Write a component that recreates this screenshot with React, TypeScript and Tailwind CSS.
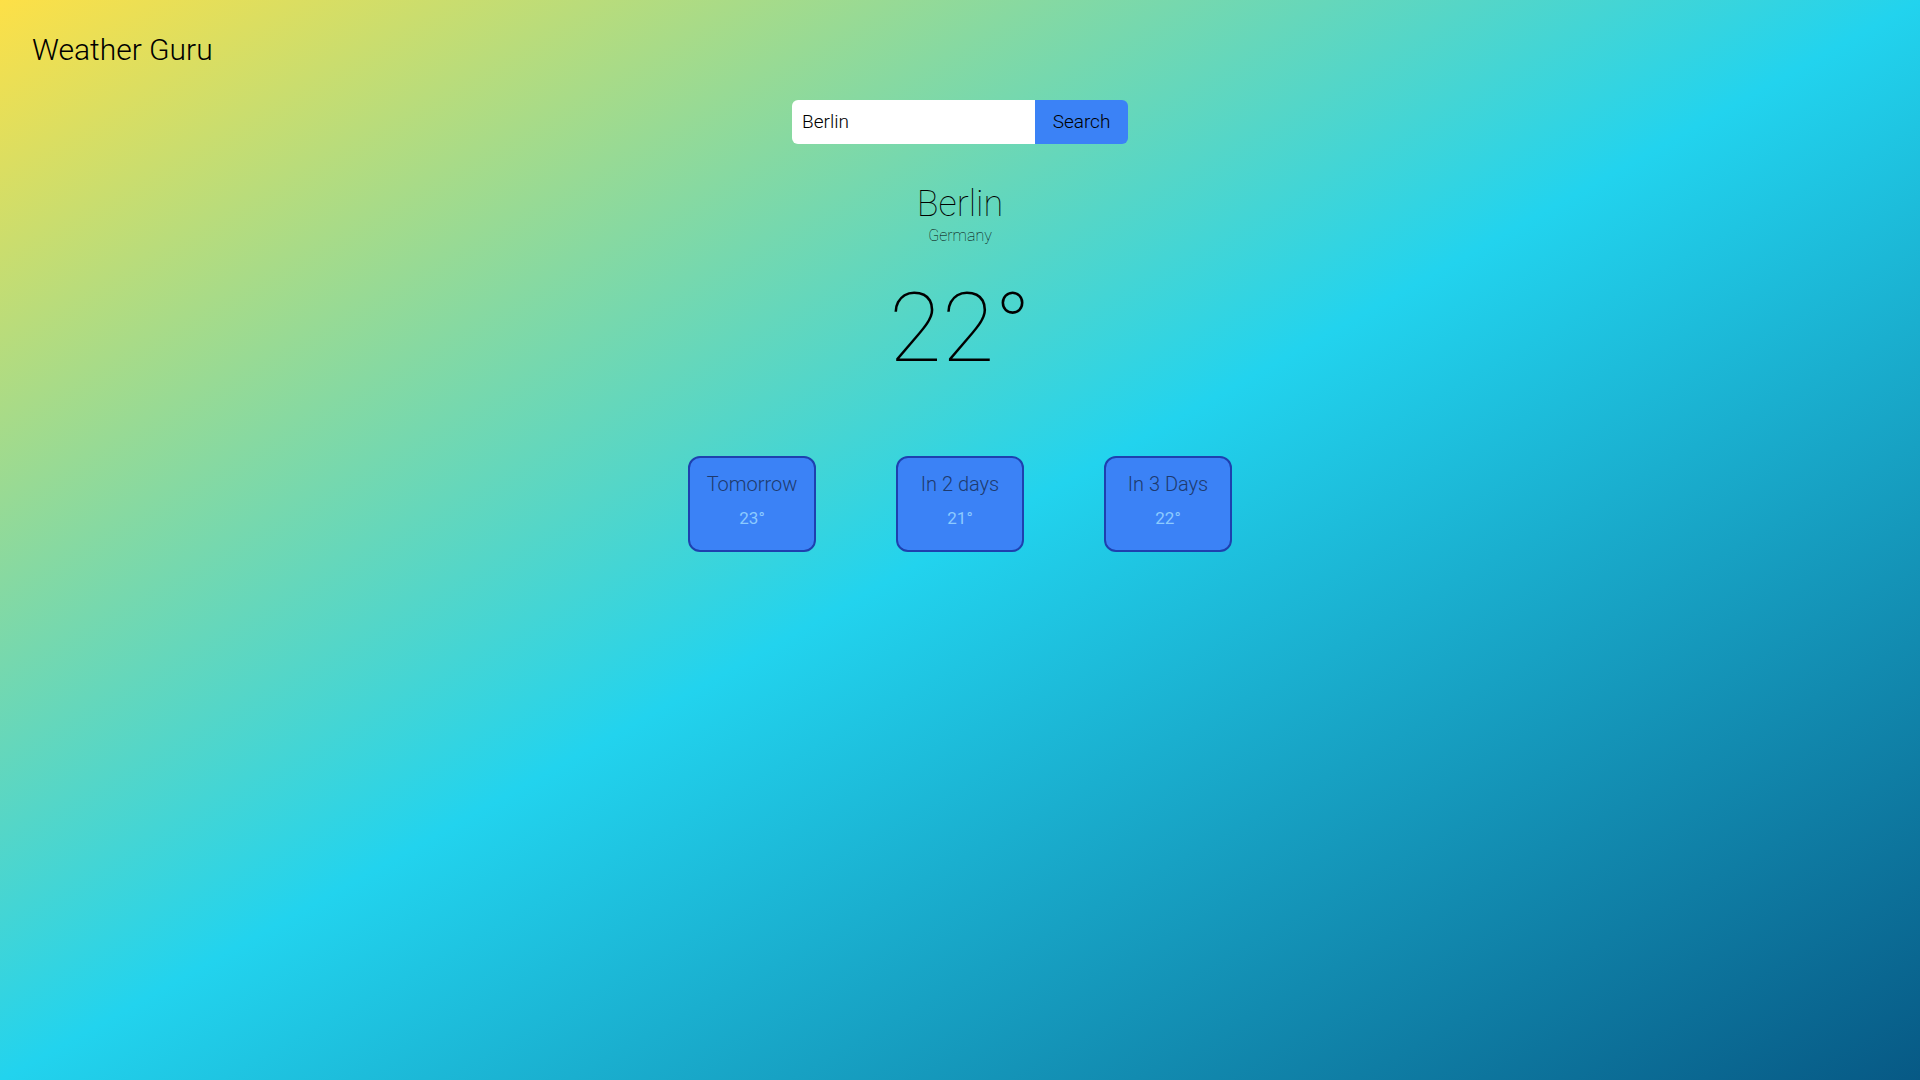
import React, { useState } from "react";

const FORECAST = [
  { label: "Tomorrow", temp: 23 },
  { label: "In 2 days", temp: 21 },
  { label: "In 3 Days", temp: 22 },
];

export default function App() {
  const [query, setQuery] = useState("Berlin");

  return (
    <div
      className="min-h-screen w-full bg-[linear-gradient(to_bottom_right,#fde047,#22d3ee,#075985)] text-black font-light"
      style={{ fontFamily: "Roboto, 'Liberation Sans', sans-serif" }}
    >
      <header className="p-8">
        <h1 className="text-3xl font-light">Weather Guru</h1>
      </header>

      <main className="flex flex-col items-center">
        <form
          className="flex h-11 w-[336px] rounded-md overflow-hidden"
          onSubmit={(e) => e.preventDefault()}
        >
          <input
            type="text"
            value={query}
            onChange={(e) => setQuery(e.target.value)}
            className="flex-1 min-w-0 bg-white px-2.5 text-[19px] font-light text-black outline-none"
          />
          <button type="submit" className="w-[93px] bg-[#3b82f6] text-[19px] font-light text-black">
            Search
          </button>
        </form>

        <div className="mt-10 flex flex-col items-center text-black">
          <h2 className="text-4xl font-thin">Berlin</h2>
          <p className="text-base font-thin">Germany</p>
        </div>

        <div className="mt-8 text-8xl leading-none font-thin">22°</div>

        <div className="mt-20 flex gap-20">
          {FORECAST.map((day) => (
            <div
              key={day.label}
              className="flex h-24 w-32 flex-col items-center rounded-xl border-2 border-[#1e40af] bg-[#3b82f6] pt-3"
            >
              <span className="text-xl font-light text-[#1e3a6e]">{day.label}</span>
              <span className="mt-2 text-[17px] font-normal text-[#8ccaff]">{day.temp}°</span>
            </div>
          ))}
        </div>
      </main>
    </div>
  );
}
